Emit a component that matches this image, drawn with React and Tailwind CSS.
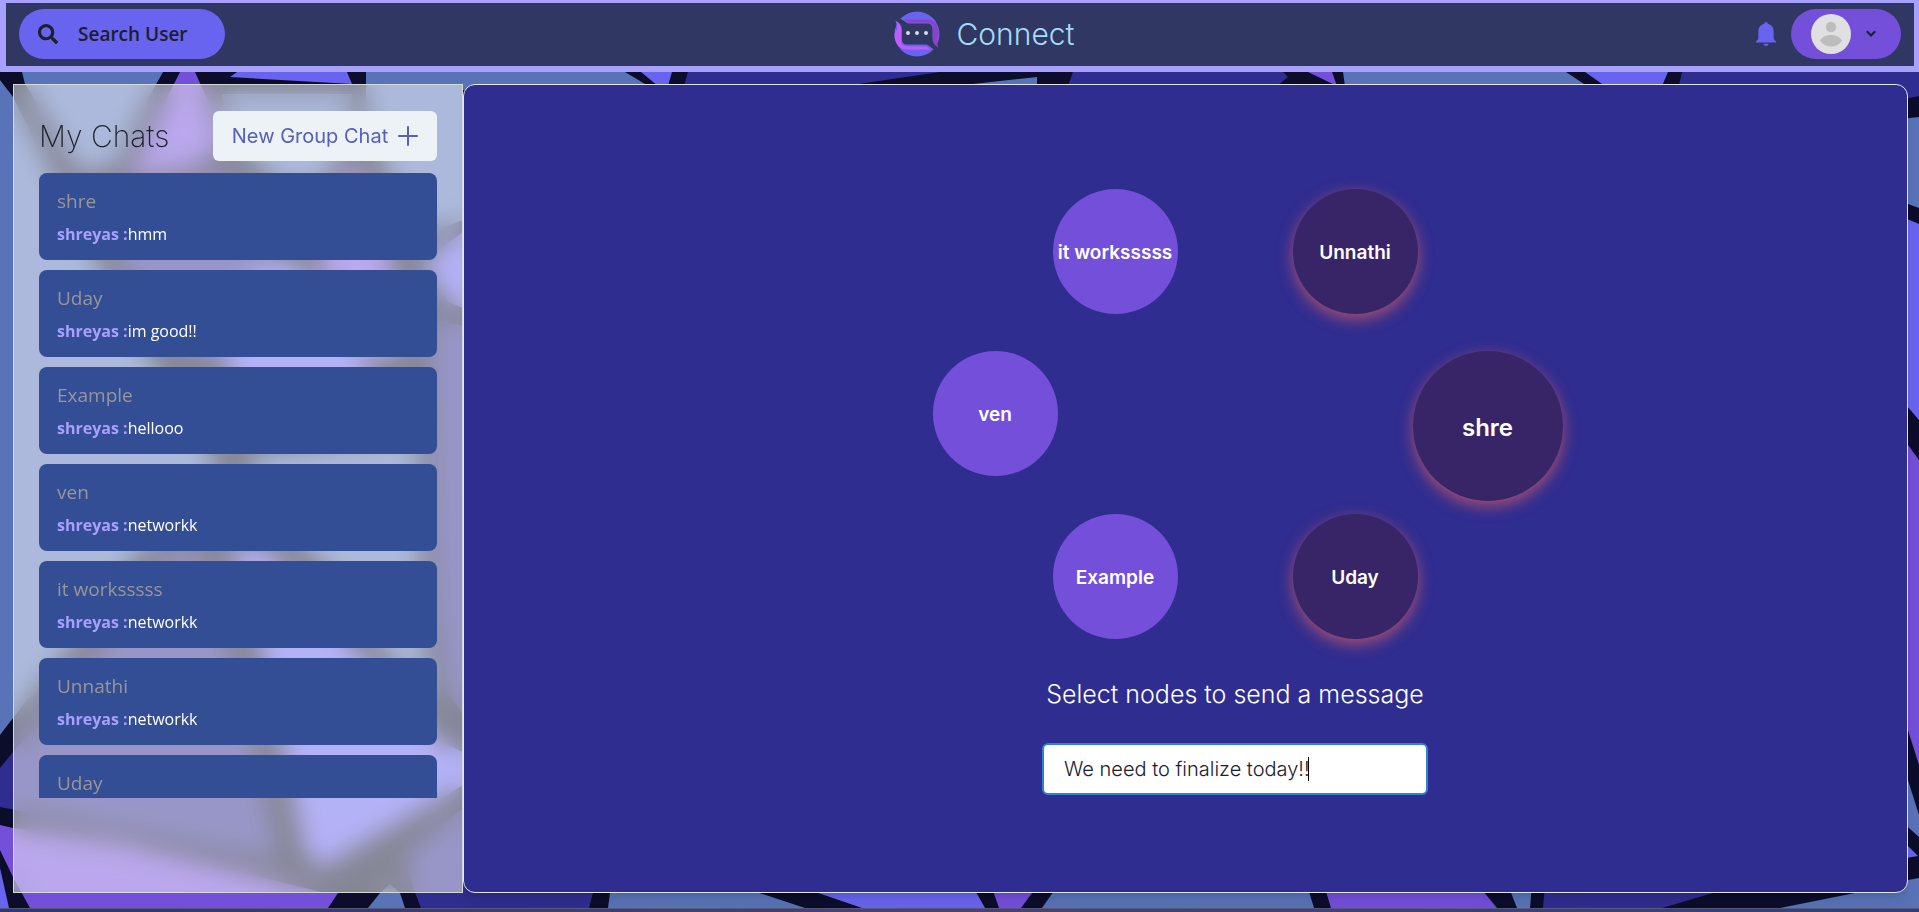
import React, { useState } from "react";
import { FaSearch } from "react-icons/fa";

const STEEL = "#5873b8";
const INDIGO = "#302d90";
const PURPLE = "#744fda";
const VIOLET = "#6964ef";

const shards = [
  // left side
  [STEEL, "0,80 13,97 60,190 100,270 150,360 215,462 215,500 140,548 75,640 13,718 0,735"],
  [INDIGO, "0,768 13,752 90,665 160,560 200,548 225,640 255,750 278,860 0,807"],
  [PURPLE, "0,825 13,828 120,842 325,893 338,893 328,908 30,908 13,877 0,850"],
  [VIOLET, "0,868 9,908 0,908"],
  [STEEL, "22,72 163,72 150,95 115,165 80,172 25,84"],
  [PURPLE, "180,72 195,72 212,110 222,150 190,168 128,176"],
  [VIOLET, "237,72 347,72 352,84 230,77"],
  [STEEL, "222,94 352,94 350,130 322,186 280,186 225,130"],
  [INDIGO, "125,186 240,176 265,262 220,362 185,350 118,260"],
  [PURPLE, "353,155 392,265 405,350 370,362 318,265"],
  [VIOLET, "257,262 295,262 365,362 370,405 240,405 225,362"],
  [STEEL, "366,72 463,72 463,220 430,232 400,200 366,120"],
  [VIOLET, "463,232 463,308 448,302 422,262"],
  [STEEL, "250,455 417,435 420,620 430,700 400,670 330,570 258,500"],
  [INDIGO, "430,318 463,326 463,715 446,690 436,600"],
  [VIOLET, "230,545 268,550 350,645 440,742 463,752 463,785 320,868 305,850 262,650"],
  [INDIGO, "463,808 463,908 421,908 414,890 405,855"],
  [STEEL, "380,893 390,884 400,893 405,908 368,908"],
  // top strip
  [STEEL, "463,72 625,72 645,84 650,90 463,90"],
  [VIOLET, "641,72 672,72 668,86 658,86"],
  [INDIGO, "688,72 940,72 845,86 684,86"],
  [STEEL, "955,86 1037,77 1037,86"],
  [INDIGO, "1073,72 1283,72 1288,77 1277,86 1068,86"],
  [PURPLE, "1308,72 1332,72 1337,86"],
  [STEEL, "1343,72 1566,72 1587,86 1345,86"],
  [VIOLET, "1585,72 1668,72 1662,86 1605,86"],
  [INDIGO, "1682,72 1919,72 1919,96 1900,100 1678,90"],
  // right strip
  [STEEL, "1900,119 1919,117 1919,208 1900,201"],
  [VIOLET, "1900,216 1919,224 1919,420 1900,398"],
  [PURPLE, "1900,434 1919,460 1919,765 1900,705"],
  [STEEL, "1900,755 1919,815 1919,837 1900,820"],
  [VIOLET, "1900,838 1918,856 1900,859"],
  [STEEL, "1855,893 1908,880 1919,878 1919,908 1780,908"],
  // bottom strip
  [INDIGO, "440,885 595,885 589,908 440,908"],
  [STEEL, "611,885 735,885 805,908 608,908"],
  [VIOLET, "795,885 972,885 985,908 862,908"],
  [PURPLE, "991,885 1038,885 1021,908 999,908"],
  [STEEL, "1058,885 1307,885 1314,908 1042,908"],
  [PURPLE, "1324,885 1478,885 1497,908 1331,908"],
  [STEEL, "1508,885 1532,885 1530,908 1517,908"],
  [INDIGO, "1545,885 1740,885 1662,908 1543,908"],
];

function Mosaic() {
  return (
    <svg
      className="absolute inset-0 h-full w-full"
      viewBox="0 0 1919 912"
      preserveAspectRatio="none"
      aria-hidden="true"
    >
      <rect width="1919" height="912" fill="#0b0d2b" />
      {shards.map(([fill, points], i) => (
        <polygon key={i} fill={fill} points={points} />
      ))}
    </svg>
  );
}

function Logo() {
  return (
    <svg className="h-[46px] w-[46px]" viewBox="0 0 46 46" aria-hidden="true">
      <circle cx="23" cy="23" r="22.5" fill="#6964ef" />
      <path d="M1.500 9.500 C5 11 7.500 14 8 18 V29 C8 32 10 33.500 13 33.500 H33 L40.500 39 L44.500 37 C40.500 34 38.500 31 38.500 27 V18 C38.500 14.500 36.500 12.500 33 12.500 H14 L7 8 Z" fill="#303763" />
      <path d="M1.500 9.500 C6.500 13 7 16 7 20 V29 C7 33.500 9.500 35.500 14 35.500 H33 L36 38.500 H13 C5.500 38.500 1 33 0.500 25 C0.500 21 2 21 1.500 18 C2 19 3 20 3 21 C3.500 17 3 13 1.500 9.500 Z" fill="#c05cfb" />
      <path d="M44.500 37 C40 33 39 30 39 26 V17 C39 13.500 37 11.500 33 11.500 H14 L11 8.500 H33 C41 8.500 44 14 44.500 21 C45 25 44 26 44.500 28 C43.500 27 43 26 43 25 C42.500 29 43 33 44.500 37 Z" fill="#8f3fc8" />
      <circle cx="14" cy="22" r="2" fill="#d9dbe8" />
      <circle cx="23" cy="22" r="2" fill="#d9dbe8" />
      <circle cx="32" cy="22" r="2" fill="#d9dbe8" />
    </svg>
  );
}

function Bell() {
  return (
    <svg className="h-6 w-5" viewBox="0 0 20 24" fill="#6964ef" aria-hidden="true">
      <path d="M10 0 C11 0 11.700 0.700 11.700 1.800 C15.500 2.600 17.600 5.800 17.600 9.500 V15.500 C17.600 17.500 18.500 18.300 20 19.200 V20.500 H0 V19.200 C1.500 18.300 2.400 17.500 2.400 15.500 V9.500 C2.400 5.800 4.500 2.600 8.300 1.800 C8.300 0.700 9 0 10 0 Z" />
      <path d="M7.500 21.800 H12.500 C12.200 23.200 11.300 24 10 24 C8.700 24 7.800 23.200 7.500 21.800 Z" />
    </svg>
  );
}

function Avatar() {
  return (
    <svg className="h-10 w-10" viewBox="0 0 40 40" aria-hidden="true">
      <circle cx="20" cy="20" r="20" fill="#e0e0e0" />
      <circle cx="20" cy="13" r="5.200" fill="#bdbdbd" />
      <path d="M9 26.500 C11.500 22.500 15.500 21 20 21 C24.500 21 28.500 22.500 31 26.500 C28.500 30.500 24.500 32.500 20 32.500 C15.500 32.500 11.500 30.500 9 26.500 Z" fill="#bdbdbd" />
    </svg>
  );
}

const chats = [
  { name: "shre", text: "hmm" },
  { name: "Uday", text: "im good!!" },
  { name: "Example", text: "hellooo" },
  { name: "ven", text: "networkk" },
  { name: "it worksssss", text: "networkk" },
  { name: "Unnathi", text: "networkk" },
  { name: "Uday" },
];

const nodes = [
  { name: "it worksssss", place: "left-[120px] top-0" },
  { name: "Unnathi", place: "left-[360px] top-0", selected: true },
  { name: "ven", place: "left-0 top-[162px]" },
  { name: "shre", place: "left-[480px] top-[162px]", selected: true, large: true },
  { name: "Example", place: "left-[120px] top-[325px]" },
  { name: "Uday", place: "left-[360px] top-[325px]", selected: true },
];

function Header() {
  return (
    <header className="relative flex items-center justify-between border-t-[3px] border-r-[5px] border-b-[6px] border-l-[6px] border-[#a7a0fd] bg-[#303763] px-[13px] pt-[6px] pb-[7px]">
      <button className="flex h-[50px] w-[206px] items-center gap-5 rounded-full bg-[#6964ef] pl-[19px] font-['Open_Sans',sans-serif] text-[19px] font-semibold text-[#1a202c]">
        <FaSearch className="h-5 w-5" />
        Search User
      </button>
      <div className="flex items-center gap-4">
        <Logo />
        <h1 className="font-['Inter',sans-serif] text-[30px] font-light leading-none text-[#a3dcf8]">Connect</h1>
      </div>
      <div className="flex items-center gap-[15px] pl-3">
        <button aria-label="Notifications">
          <Bell />
        </button>
        <button aria-label="Profile menu" className="flex h-[50px] w-[110px] items-center gap-[15px] rounded-full bg-[#744fda] pl-5">
          <Avatar />
          <svg className="h-[10px] w-[10px]" viewBox="0 0 10 10" aria-hidden="true">
            <path d="M0.800 2.300 L5 6.500 L9.200 2.300" fill="none" stroke="#1a202c" strokeWidth="2" />
          </svg>
        </button>
      </div>
    </header>
  );
}

function ChatList() {
  return (
    <aside className="flex min-h-0 flex-col gap-3 border border-[#d6dad6] bg-white/50 px-[25px] pt-[26px] pb-[94px] backdrop-blur-[12px]">
      <div className="flex items-center justify-between">
        <h2 className="font-['Inter',sans-serif] text-[30px] font-extralight text-[#1a202c]">My Chats</h2>
        <button className="flex h-[50px] w-[224px] shrink-0 items-center justify-center gap-[10px] whitespace-nowrap rounded-md bg-[#edf2f7] font-['Inter',sans-serif] text-[20px] text-[#5560b8]">
          New Group Chat
          <svg className="h-5 w-5" viewBox="0 0 20 20" aria-hidden="true">
            <path d="M10 1 V19 M1 10 H19" stroke="#5560b8" strokeWidth="2" strokeLinecap="round" />
          </svg>
        </button>
      </div>
      <ul className="flex min-h-0 flex-1 flex-col gap-[10px] overflow-hidden font-['Open_Sans',sans-serif]">
        {chats.map((chat, i) => (
          <li key={i} className="h-[87px] shrink-0 rounded-lg bg-[#334e95]">
            <button className="flex h-full w-full flex-col justify-start gap-[5px] px-[18px] pt-[14px] text-left">
              <span className="text-[19px] leading-7 text-[#979797]">{chat.name}</span>
              {chat.text && (
                <span className="text-[16px] leading-7 text-white">
                  <b className="font-bold text-[#a7a0fd]">shreyas :</b>
                  {chat.text}
                </span>
              )}
            </button>
          </li>
        ))}
      </ul>
    </aside>
  );
}

function Network() {
  const [message, setMessage] = useState("We need to finalize today!!");
  return (
    <section className="flex min-w-0 flex-col items-center rounded-xl border border-[#e2e8f0] bg-[#302d90] pl-[99px] pt-[104px] font-['Inter',sans-serif] text-white shadow-lg">
      <div className="relative h-[450px] w-[605px] shrink-0">
        {nodes.map((node) => (
          <button
            key={node.name}
            aria-pressed={Boolean(node.selected)}
            className={`absolute flex items-center justify-center whitespace-nowrap rounded-full pt-1 font-semibold ${node.place} ${
              node.large ? "h-[150px] w-[150px] text-[24px]" : "h-[125px] w-[125px] text-[19px]"
            } ${node.selected ? "bg-[#372568] shadow-[0_5px_15px_#f5655b99]" : "bg-[#744fda]"}`}
          >
            {node.name}
          </button>
        ))}
      </div>
      <label htmlFor="message" className="mt-[37px] text-[25px] font-light leading-9">
        Select nodes to send a message
      </label>
      <div className="relative mt-[31px] w-[386px]">
        <input
          id="message"
          value={message}
          onChange={(e) => setMessage(e.target.value)}
          className="h-[52px] w-full rounded-md border-2 border-[#3182ce] bg-white px-5 text-[20px] font-light text-[#1a202c] outline-none caret-transparent"
        />
        <span className="absolute left-[266px] top-[14px] h-6 w-px bg-black" />
      </div>
    </section>
  );
}

export default function App() {
  return (
    <div className="relative flex h-screen flex-col overflow-hidden">
      <Mosaic />
      <Header />
      <main className="relative grid min-h-0 flex-1 grid-cols-[minmax(400px,450px)_1fr] pt-3 pr-[11px] pb-[15px] pl-[13px]">
        <ChatList />
        <Network />
      </main>
      <footer className="relative h-1 border-t border-[#555a74] bg-linear-to-r from-[#2f3678] via-[#4e3f72] to-[#2f3f80]" />
    </div>
  );
}
